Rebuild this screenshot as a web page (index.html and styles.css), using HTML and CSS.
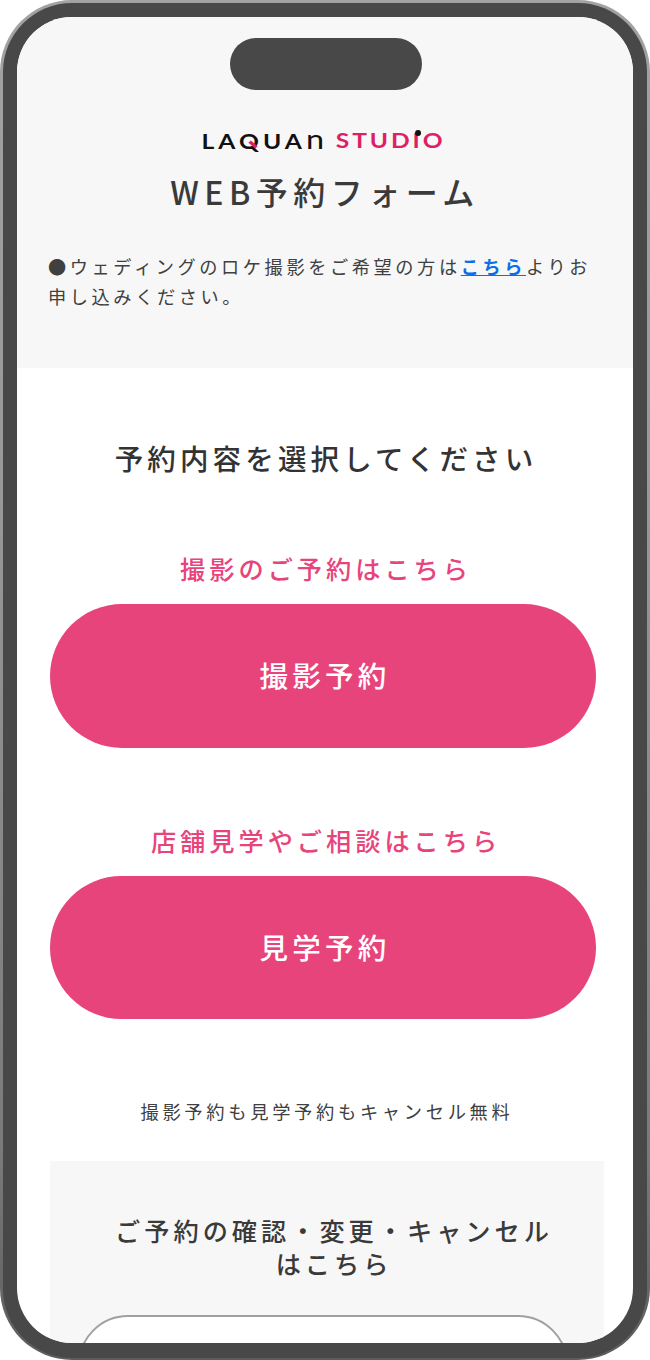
FILE: index.html
```html
<!DOCTYPE html>
<html lang="ja">
<head>
<meta charset="utf-8">
<title>WEB予約フォーム</title>
<link rel="stylesheet" href="styles.css">
</head>
<body>
<div class="phone">
  <div class="bezel">
    <div class="notch"></div>
    <div class="screen">
      <header class="head">
        <div class="logo">
          <span class="logo-dark">LA<span class="logo-q">Q</span>UA<span class="logo-n">n</span></span>
          <span class="logo-pink">STUD<span class="logo-i">I</span>O</span>
        </div>
        <h1 class="title">WEB予約フォーム</h1>
        <p class="intro">●ウェディングのロケ撮影をご希望の方は<a class="intro-link" href="#">こちら</a>よりお申し込みください。</p>
      </header>
      <main class="main">
        <h2 class="lead">予約内容を選択してください</h2>
        <section class="choice">
          <p class="choice-label">撮影のご予約はこちら</p>
          <a class="pill" href="#">撮影予約</a>
        </section>
        <section class="choice">
          <p class="choice-label">店舗見学やご相談はこちら</p>
          <a class="pill" href="#">見学予約</a>
        </section>
        <p class="note">撮影予約も見学予約もキャンセル無料</p>
        <section class="confirm">
          <h3 class="confirm-title">ご予約の確認・変更・キャンセル<br>はこちら</h3>
          <a class="confirm-btn" href="#"></a>
        </section>
      </main>
    </div>
  </div>
</div>
</body>
</html>
```

FILE: styles.css
```css
* { box-sizing: border-box; }
html, body { margin: 0; padding: 0; background: #fff; }
body {
  width: 650px;
  height: 1360px;
  overflow: hidden;
  font-family: "Noto Sans CJK JP", "Noto Sans", sans-serif;
  color: #333;
}
.phone {
  width: 650px;
  height: 1360px;
  padding: 3px 3px 2px;
  border-radius: 72px;
  background: linear-gradient(#a2a2a2, #999 35%, #7a7a7a 85%, #5c5c5c);
}
.bezel {
  position: relative;
  height: 100%;
  padding: 14px 14px 15px;
  border-radius: 69px;
  background: #484848;
}
.notch {
  position: absolute;
  top: 35px;
  left: 227px;
  width: 192px;
  height: 52px;
  border-radius: 26px;
  background: #484848;
  z-index: 2;
}
.screen {
  height: 100%;
  border-radius: 55px;
  overflow: hidden;
  background: #fff;
}
.head {
  height: 351px;
  padding: 112px 31px 0;
  background: #f7f7f7;
}
.logo {
  display: flex;
  justify-content: center;
  gap: 15px;
  height: 22px;
  padding-right: 2px;
  font-family: "Lato", sans-serif;
  font-size: 20.5px;
  line-height: 22px;
  font-weight: 700;
  white-space: nowrap;
}
.logo-dark, .logo-pink {
  display: inline-block;
  letter-spacing: 2.4px;
  transform: scaleX(1.2);
}
.logo-dark { color: #14100f; margin-right: 6px; letter-spacing: 3.4px; }
.logo-pink { color: #df1f63; margin-left: 6px; }
.logo-q { position: relative; }
.logo-q::after {
  content: "";
  position: absolute;
  left: 8px;
  top: 14px;
  width: 8px;
  height: 3px;
  background: #df1f63;
  transform: rotate(45deg);
}
.logo-n { font-size: 27px; line-height: 20px; font-weight: 400; }
.logo-i { position: relative; }
.logo-i::after {
  content: "";
  position: absolute;
  left: 2px;
  top: 1.5px;
  width: 5px;
  height: 6px;
  border-radius: 50%;
  background: #14100f;
}
.title {
  margin: 16px 0 0;
  text-align: center;
  font-size: 32px;
  line-height: 48px;
  font-weight: 500;
  letter-spacing: 5.5px;
  color: #3a3a3a;
}
.intro {
  margin: 36px 0 0;
  font-size: 18.2px;
  line-height: 30px;
  font-weight: 400;
  letter-spacing: 3.6px;
  color: #404040;
}
.intro-link {
  color: #0a6fe8;
  font-weight: 700;
  text-decoration: underline;
}
.main {
  padding: 67px 29px 0 33px;
}
.lead {
  margin: 0;
  padding-right: 2px;
  text-align: center;
  font-size: 28.5px;
  line-height: 46px;
  font-weight: 500;
  letter-spacing: 4.15px;
}
.choice { margin-top: 68px; }
.choice + .choice { margin-top: 73px; }
.choice-label {
  margin: 0 0 17px;
  padding-right: 2px;
  text-align: center;
  font-size: 25.2px;
  line-height: 38px;
  font-weight: 500;
  letter-spacing: 4px;
  color: #e8447c;
}
.pill {
  display: flex;
  align-items: center;
  justify-content: center;
  width: 546px;
  height: 143.5px;
  padding: 0 0 2px 4px;
  border-radius: 72px;
  background: #e8447c;
  color: #fff;
  text-decoration: none;
  font-size: 28.5px;
  font-weight: 500;
  letter-spacing: 4.2px;
}
.note {
  margin: 76px 0 0;
  text-align: center;
  font-size: 18.3px;
  line-height: 32px;
  font-weight: 400;
  letter-spacing: 3.66px;
  color: #404040;
}
.confirm {
  margin-top: 34px;
  height: 300px;
  padding: 53px 0 0;
  background: #f7f7f7;
}
.confirm-title {
  margin: 0;
  padding-left: 14px;
  text-align: center;
  font-size: 25.2px;
  line-height: 33px;
  font-weight: 500;
  letter-spacing: 4px;
  color: #3a3a3a;
}
.confirm-btn {
  display: block;
  width: 490px;
  height: 100px;
  margin: 35px 0 0 28px;
  border: 2px solid #a0a0a0;
  border-radius: 50px;
  background: #fff;
}
```
